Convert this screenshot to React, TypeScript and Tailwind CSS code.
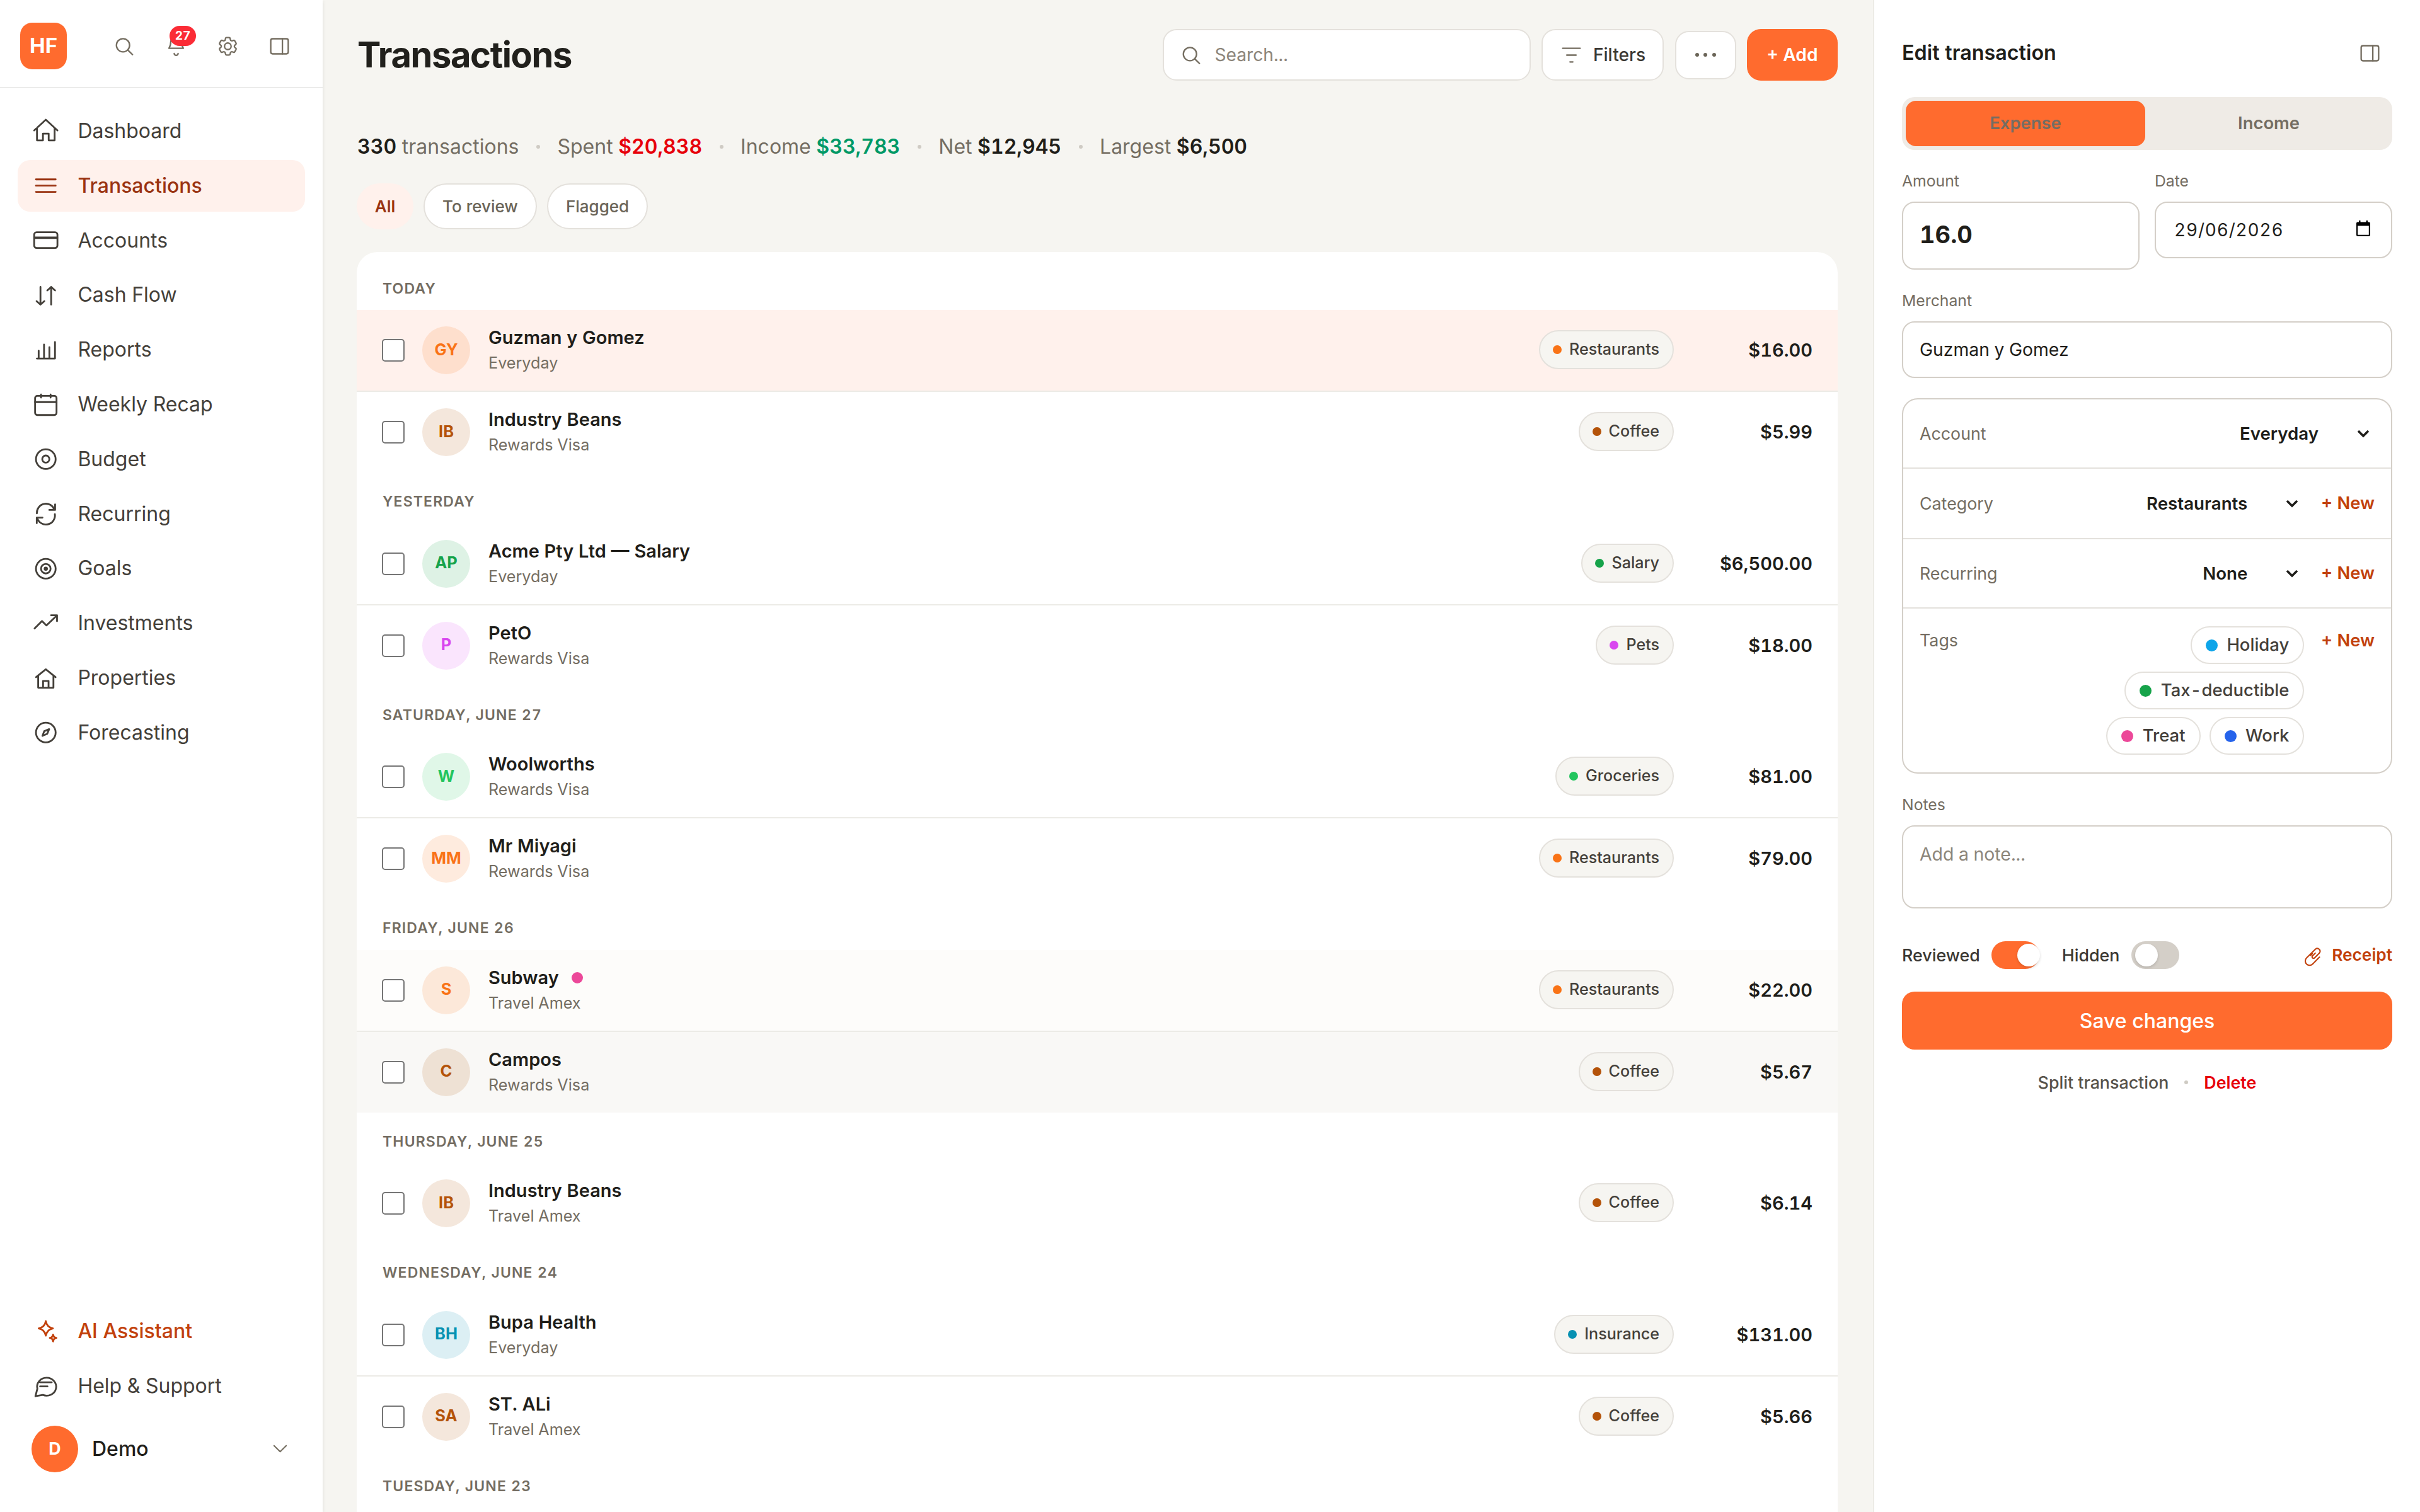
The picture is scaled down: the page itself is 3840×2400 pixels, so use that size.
import type { ReactNode } from "react";
import { clsx } from "clsx";

type NavItem = { label: string; icon: ReactNode };

const navItems: NavItem[] = [
  {
    label: "Dashboard",
    icon: <path d="M2.25 11.6 12 2.6l9.75 9M4.6 9.6V20h5v-5.7h4.8V20h5V9.6" />,
  },
  { label: "Transactions", icon: <path d="M3.75 6.75h16.5M3.75 12h16.5M3.75 17.25h16.5" /> },
  {
    label: "Accounts",
    icon: (
      <>
        <rect x="2.25" y="5.1" width="19.5" height="13.2" rx="2" />
        <path d="M2.25 9.3h19.5M2.25 10.1h19.5" strokeWidth="1.2" />
      </>
    ),
  },
  {
    label: "Cash Flow",
    icon: (
      <path d="M7.5 5v14.8m-3.25-2.9 3.25 2.9 3.25-2.9M16.5 19.8V5m-3.25 2.9L16.5 5l3.25 2.9" />
    ),
  },
  {
    label: "Reports",
    icon: <path d="M4.5 19.6h15.2M6 19.6v-6.6M10.5 19.6V7.9M15 19.6v-9.4M19.7 19.6V5.8" />,
  },
  {
    label: "Weekly Recap",
    icon: (
      <>
        <rect x="3" y="5" width="18" height="16" rx="1.8" />
        <path d="M3 10.2h18M8 3.8v2.6M16 3.8v2.6" />
      </>
    ),
  },
  {
    label: "Budget",
    icon: (
      <>
        <circle cx="12" cy="12" r="8.25" />
        <circle cx="12" cy="12" r="3" />
      </>
    ),
  },
  {
    label: "Recurring",
    icon: (
      <path d="M4.5 11.6A7.6 7.6 0 0 1 19.2 8.4M19.8 4v4.7h-4.9M19.6 12.2A7.6 7.6 0 0 1 4.8 15.5M4.4 19.8v-4.7h4.8" />
    ),
  },
  {
    label: "Goals",
    icon: (
      <>
        <circle cx="12" cy="12" r="8.25" />
        <circle cx="12" cy="12" r="4" />
        <circle cx="12" cy="12" r="1" fill="currentColor" />
      </>
    ),
  },
  {
    label: "Investments",
    icon: <path d="m2.6 16.6 6.2-6.2 3.7 3.7 8.8-8.3M16.4 5.6h5v5" />,
  },
  {
    label: "Properties",
    icon: <path d="M3.8 11.6 12 5l8.2 6.6M5.6 10.4v10h12.8v-10M9.7 20.4v-5.7h4.6v5.7" />,
  },
  {
    label: "Forecasting",
    icon: (
      <>
        <circle cx="12" cy="12" r="8.25" />
        <path d="m9.2 14.8 1.5-3.9 4.1-1.7-1.6 3.9z" />
      </>
    ),
  },
];

type Transaction = {
  initials: string;
  merchant: string;
  account: string;
  category: keyof typeof categoryColors;
  amount: string;
  flagged?: boolean;
  rowClass?: string;
};

const categoryColors = {
  Restaurants: "#f97316",
  Coffee: "#b45309",
  Salary: "#16a34a",
  Pets: "#d946ef",
  Groceries: "#22c55e",
  Insurance: "#0891b2",
};

const groups: { date: string; rows: Transaction[] }[] = [
  {
    date: "Today",
    rows: [
      { initials: "GY", merchant: "Guzman y Gomez", account: "Everyday", category: "Restaurants", amount: "$16.00", rowClass: "bg-[#fff1ec]" },
      { initials: "IB", merchant: "Industry Beans", account: "Rewards Visa", category: "Coffee", amount: "$5.99" },
    ],
  },
  {
    date: "Yesterday",
    rows: [
      { initials: "AP", merchant: "Acme Pty Ltd — Salary", account: "Everyday", category: "Salary", amount: "$6,500.00" },
      { initials: "P", merchant: "PetO", account: "Rewards Visa", category: "Pets", amount: "$18.00" },
    ],
  },
  {
    date: "Saturday, June 27",
    rows: [
      { initials: "W", merchant: "Woolworths", account: "Rewards Visa", category: "Groceries", amount: "$81.00" },
      { initials: "MM", merchant: "Mr Miyagi", account: "Rewards Visa", category: "Restaurants", amount: "$79.00" },
    ],
  },
  {
    date: "Friday, June 26",
    rows: [
      { initials: "S", merchant: "Subway", account: "Travel Amex", category: "Restaurants", amount: "$22.00", flagged: true, rowClass: "bg-[#fdfcfa]" },
      { initials: "C", merchant: "Campos", account: "Rewards Visa", category: "Coffee", amount: "$5.67", rowClass: "bg-[#f9f8f6]" },
    ],
  },
  {
    date: "Thursday, June 25",
    rows: [
      { initials: "IB", merchant: "Industry Beans", account: "Travel Amex", category: "Coffee", amount: "$6.14" },
    ],
  },
  {
    date: "Wednesday, June 24",
    rows: [
      { initials: "BH", merchant: "Bupa Health", account: "Everyday", category: "Insurance", amount: "$131.00" },
      { initials: "SA", merchant: "ST. ALi", account: "Travel Amex", category: "Coffee", amount: "$5.66" },
    ],
  },
  { date: "Tuesday, June 23", rows: [] },
];

const tags = [
  { label: "Holiday", dot: "bg-[#0ea5e9]" },
  { label: "Tax-deductible", dot: "bg-[#16a34a]" },
  { label: "Treat", dot: "bg-[#ec4899]" },
  { label: "Work", dot: "bg-[#2563eb]" },
];

function Icon({ className, children }: { className?: string; children: ReactNode }) {
  return (
    <svg
      aria-hidden
      viewBox="0 0 24 24"
      fill="none"
      stroke="currentColor"
      strokeWidth="1.5"
      strokeLinecap="round"
      strokeLinejoin="round"
      className={clsx("shrink-0", className)}
    >
      {children}
    </svg>
  );
}

function PanelIcon() {
  return (
    <Icon className="size-[37px]">
      <rect x="3" y="4.2" width="18" height="15.6" rx="1.9" />
      <path d="M15 4.2v15.6" />
    </Icon>
  );
}

function SearchIcon() {
  return (
    <Icon className="size-[37px]">
      <circle cx="10.5" cy="10.9" r="6.8" />
      <path d="m15.4 15.8 4.9 4.8" />
    </Icon>
  );
}

function Sidebar() {
  return (
    <aside className="relative z-10 flex w-[512px] shrink-0 flex-col bg-white shadow-[0_2px_6px_rgba(0,0,0,0.1)]">
      <div className="flex h-[140px] items-center border-b-2 border-[#ebebea] pl-8 pt-[8px]">
        <div className="flex size-[74px] items-center justify-center rounded-[19px] bg-[#ff6b2e] text-[33px] font-bold text-white">
          HF
        </div>
        <div className="ml-[50px] flex text-[#746d60]">
          <button type="button" className="flex size-[82px] items-center justify-center">
            <SearchIcon />
          </button>
          <button type="button" className="relative flex size-[82px] items-center justify-center">
            <Icon className="size-[37px]">
              <path d="M4.6 14h14.8M4.6 14c1.2-1.9 1.9-4 1.9-7a5.5 5.5 0 0 1 11 0c0 3 .7 5.1 1.9 7M10 19.4a2 1.9 0 0 0 4 0" />
            </Icon>
            <span className="absolute left-[31px] top-[9px] flex h-8 w-[42px] items-center justify-center rounded-full bg-[#fb2c36] text-[19px] font-bold text-white">
              27
            </span>
          </button>
          <button type="button" className="flex size-[82px] items-center justify-center">
            <Icon className="size-[37px]">
              <path d="M9.594 3.94c.09-.542.56-.94 1.11-.94h2.593c.55 0 1.02.398 1.11.94l.213 1.281c.063.374.313.686.645.87.074.04.147.083.22.127.325.196.72.257 1.075.124l1.217-.456a1.125 1.125 0 0 1 1.37.49l1.296 2.247a1.125 1.125 0 0 1-.26 1.431l-1.003.827c-.293.241-.438.613-.43.992a7.723 7.723 0 0 1 0 .255c-.008.378.137.75.43.991l1.004.827c.424.35.534.955.26 1.43l-1.298 2.247a1.125 1.125 0 0 1-1.369.491l-1.217-.456c-.355-.133-.75-.072-1.076.124a6.47 6.47 0 0 1-.22.128c-.331.183-.581.495-.644.869l-.213 1.281c-.09.543-.56.94-1.11.94h-2.594c-.55 0-1.019-.398-1.11-.94l-.213-1.281c-.062-.374-.312-.686-.644-.87a6.52 6.52 0 0 1-.22-.127c-.325-.196-.72-.257-1.076-.124l-1.217.456a1.125 1.125 0 0 1-1.369-.49l-1.297-2.247a1.125 1.125 0 0 1 .26-1.431l1.004-.827c.292-.24.437-.613.43-.991a6.932 6.932 0 0 1 0-.255c.007-.38-.138-.751-.43-.992l-1.004-.827a1.125 1.125 0 0 1-.26-1.43l1.297-2.247a1.125 1.125 0 0 1 1.37-.491l1.216.456c.356.133.751.072 1.076-.124.072-.044.146-.086.22-.128.332-.183.582-.495.644-.869l.214-1.28Z" />
              <circle cx="12" cy="12" r="3.4" />
            </Icon>
          </button>
          <button type="button" className="flex size-[82px] items-center justify-center">
            <PanelIcon />
          </button>
        </div>
      </div>

      <nav className="flex flex-1 flex-col gap-[4.8px] px-7 pt-[27px]">
        {navItems.map((item) => {
          const active = item.label === "Transactions";
          return (
            <a
              key={item.label}
              className={clsx(
                "flex h-[82px] items-center gap-[28px] rounded-[20px] pl-[22px] text-[32px]",
                active ? "bg-[#fff1ec] font-medium text-[#9a3412]" : "text-[#44403a]"
              )}
            >
              <Icon className="size-[45.4px]">{item.icon}</Icon>
              {item.label}
            </a>
          );
        })}
      </nav>

      <div className="flex flex-col gap-[4.8px] px-7 pb-[51px]">
        <a className="flex h-[82px] items-center gap-[28px] pl-[22px] text-[32px] font-medium text-[#c2410c]">
          <Icon className="size-[45.4px]">
            <path d="M12 3.2c.6 3.6 2.3 5.4 6 6.1-3.7.7-5.4 2.5-6 6.1-.6-3.6-2.3-5.4-6-6.1 3.7-.7 5.4-2.5 6-6.1zM18.1 14.5c.3 1.7 1 2.5 2.8 2.8-1.8.3-2.5 1.1-2.8 2.9-.3-1.8-1-2.6-2.8-2.9 1.8-.3 2.5-1.1 2.8-2.8z" />
          </Icon>
          AI Assistant
        </a>
        <a className="flex h-[82px] items-center gap-[28px] pl-[22px] text-[32px] text-[#44403a]">
          <Icon className="size-[45.4px]">
            <path d="M3.3 20.2 4.9 13.9A8 7.5 0 1 1 9.5 19.1zM7 8.5h10M7.2 12h6.2" />
          </Icon>
          Help &amp; Support
        </a>
        <button type="button" className="mt-[4px] flex h-[99px] items-center pl-[22px] pr-[23px]">
          <span className="flex size-[74px] items-center justify-center rounded-full bg-[#ff6b2e] text-[26.8px] font-bold text-white">
            D
          </span>
          <span className="ml-[22px] text-[32px] font-medium text-[#1f1e1a]">Demo</span>
          <Icon className="ml-auto size-[33px] text-[#746d60]">
            <path d="m5 8.5 7 7 7-7" />
          </Icon>
        </button>
      </div>
    </aside>
  );
}

function Stat({ label, value, valueClass }: { label: string; value: string; valueClass?: string }) {
  return (
    <>
      <span className="size-[6px] rounded-full bg-[#cfcbc4]" />
      <span>
        {label}{" "}
        <span className={clsx("font-semibold", valueClass ?? "text-[#1f1e1a]")}>{value}</span>
      </span>
    </>
  );
}

function TransactionRow({ row, last }: { row: Transaction; last: boolean }) {
  const color = categoryColors[row.category];
  return (
    <div
      className={clsx(
        "flex items-center px-10",
        last ? "h-[128px]" : "h-[130px] border-b-2 border-[#ecebe6]",
        row.rowClass
      )}
    >
      <span className="size-9 rounded-[5px] border-2 border-[#767676] bg-white" />
      <span
        className="ml-7 flex size-[76px] items-center justify-center rounded-full pb-[2px] text-[25.5px] font-bold"
        style={{ color, backgroundColor: `${color}24` }}
      >
        {row.initials}
      </span>
      <div className="ml-[29px] flex flex-1 flex-col">
        <span className="flex items-center gap-5 text-[29px] font-semibold leading-10 text-[#1f1e1a]">
          {row.merchant}
          {row.flagged && <span className="size-[18px] rounded-full bg-[#ec4899]" />}
        </span>
        <span className="text-[25.2px] leading-[40px] text-[#746d62]">{row.account}</span>
      </div>
      <span className="mb-[2px] flex h-[62px] items-center gap-[12px] rounded-full border-2 border-[#e4e1dc] bg-[#f6f5f1] pl-5 pr-[21px] text-[25.1px] font-medium text-[#44403a]">
        <span className="size-[14px] rounded-full" style={{ backgroundColor: color }} />
        {row.category}
      </span>
      <span className="w-[220px] text-right text-[29px] font-semibold text-[#1f1e1a]">{row.amount}</span>
    </div>
  );
}

function TransactionsPage() {
  return (
    <main className="flex min-w-0 flex-1 flex-col pl-[54px] pr-14">
      <header className="flex h-[174px] items-center">
        <h1 className="ml-px text-[56px] font-bold tracking-[-1.4px] text-[#21201c]">Transactions</h1>
        <div className="ml-auto flex items-center gap-[17.5px] text-[28.2px]">
          <div className="flex h-[82px] w-[584px] items-center rounded-[22px] border-2 border-[#e4e1dc] bg-white pl-[25px] text-[#8c857a]">
            <span className="mr-[19px] text-[#746d60]">
              <SearchIcon />
            </span>
            Search...
          </div>
          <button
            type="button"
            className="flex h-[82px] w-[194px] items-center justify-center gap-[16px] rounded-[22px] border-2 border-[#e4e1dc] bg-white font-medium text-[#3b3833]"
          >
            <Icon className="size-[37px] text-[#746d60]">
              <path d="M3 5h18M7.2 12h9.6M10.5 19h3" />
            </Icon>
            Filters
          </button>
          <button
            type="button"
            className="flex h-[77px] w-[97px] items-center justify-center gap-[7.5px] rounded-[22px] border-2 border-[#e4e1dc] bg-white"
          >
            <span className="size-[6px] rounded-full bg-[#6b6558]" />
            <span className="size-[6px] rounded-full bg-[#6b6558]" />
            <span className="size-[6px] rounded-full bg-[#6b6558]" />
          </button>
          <button
            type="button"
            className="flex h-[82px] w-36 items-center justify-center rounded-[22px] bg-[#ff6b2e] font-semibold text-white"
          >
            + Add
          </button>
        </div>
      </header>

      <div className="ml-px mt-[38px] flex h-[41px] items-center gap-[27.5px] text-[32px] text-[#746d62]">
        <span>
          <span className="font-semibold text-[#1f1e1a]">330</span> transactions
        </span>
        <Stat label="Spent" value="$20,838" valueClass="text-[#e7000b]" />
        <Stat label="Income" value="$33,783" valueClass="text-[#009966]" />
        <Stat label="Net" value="$12,945" />
        <Stat label="Largest" value="$6,500" />
      </div>

      <div className="mt-[38px] flex h-[73px] gap-4 text-[26px] font-medium text-[#6b6558]">
        <span className="flex w-[90px] items-center justify-center rounded-full bg-[#fff1ec] font-semibold text-[#9a3412]">
          All
        </span>
        <span className="flex w-[180px] items-center justify-center rounded-full border-2 border-[#e4e1dc] bg-white">
          To review
        </span>
        <span className="flex w-[160px] items-center justify-center rounded-full border-2 border-[#e4e1dc] bg-white">
          Flagged
        </span>
      </div>

      <section className="mt-9 flex-1 overflow-hidden rounded-t-[33px] bg-white pt-[11.5px]">
        {groups.map((group) => (
          <div key={group.date}>
            <h2 className="flex h-[80.5px] items-center pl-[41px] pt-[12px] text-[23px] font-semibold uppercase tracking-[1.15px] text-[#746d62]">
              {group.date}
            </h2>
            {group.rows.map((row, index) => (
              <TransactionRow key={row.merchant} row={row} last={index === group.rows.length - 1} />
            ))}
          </div>
        ))}
      </section>
    </main>
  );
}

function SelectValue({ value, withNew }: { value: string; withNew?: boolean }) {
  return (
    <div className="flex items-center pt-px text-[27.7px] font-semibold text-[#1f1e1a]">
      {value}
      <svg
        aria-hidden
        viewBox="0 0 20 14"
        fill="none"
        stroke="currentColor"
        strokeWidth="3.6"
        className={clsx("h-[14px] w-5", withNew ? "ml-[61px] mr-[36px]" : "ml-[61px] mr-[8px]")}
      >
        <path d="m2 3 8 8 8-8" />
      </svg>
      {withNew && <span className="pb-px text-[27.4px] text-[#c2410c]">+ New</span>}
    </div>
  );
}

function TagPill({ label, dot }: { label: string; dot: string }) {
  return (
    <span className="flex h-[60px] items-center gap-[14.5px] rounded-full border-2 border-[#e4e1dc] pl-[22px] pr-[22px] text-[27.5px] font-medium text-[#44403a]">
      <span className={clsx("size-[19px] rounded-full", dot)} />
      {label}
    </span>
  );
}

function EditPanel() {
  return (
    <aside className="flex w-[868px] shrink-0 flex-col border-l-2 border-[#ecebe6] bg-white pl-11 pr-11 text-[26.8px]">
      <div className="flex h-[154px] items-center justify-between pr-[17px] pt-[15px]">
        <h2 className="text-[32.3px] font-semibold text-[#1f1e1a]">Edit transaction</h2>
        <span className="text-[#746d60]">
          <PanelIcon />
        </span>
      </div>

      <div className="flex h-[84px] rounded-[20px] bg-[#efebe6] py-[6px] pl-[6px] text-[27.4px] font-semibold text-[#746d62]">
        <span className="flex w-[380px] items-center justify-center rounded-[16px] bg-[#ff6b2e]">Expense</span>
        <span className="flex flex-1 items-center justify-center">Income</span>
      </div>

      <div className="mt-[29px] grid grid-cols-2 gap-x-6 text-[#1f1e1a]">
        <div>
          <p className="h-[53px] text-[24.75px] leading-10 text-[#746d62]">Amount</p>
          <div className="flex h-[108px] items-center rounded-[20px] border-2 border-[#d4cfc8] pl-[26px] pb-1 text-[38px] font-bold">
            16.0
          </div>
        </div>
        <div>
          <p className="h-[53px] text-[24.75px] leading-10 text-[#746d62]">Date</p>
          <div className="flex h-[90px] items-center justify-between rounded-[20px] border-2 border-[#d4cfc8] pl-[29px] pr-8 text-[28px]">
            <span className="tracking-[0.8px]">29/06/2026</span>
            <svg aria-hidden viewBox="0 0 24 26" className="mb-1 h-[26px] w-6 text-black">
              <path
                fill="currentColor"
                fillRule="evenodd"
                d="M3 2.5h2V0h2.5v2.5h9V0H19v2.5h2a2 2 0 0 1 2 2V23a2 2 0 0 1-2 2H3a2 2 0 0 1-2-2V4.5a2 2 0 0 1 2-2zM3.2 8.5v14.3h17.6V8.5z"
              />
            </svg>
          </div>
        </div>
      </div>

      <p className="mt-[29px] h-[53px] text-[24.75px] leading-10 text-[#746d62]">Merchant</p>
      <div className="flex h-[90px] items-center rounded-[20px] border-2 border-[#d4cfc8] pl-[26px] pt-px text-[28.3px] text-[#1f1e1a]">
        Guzman y Gomez
      </div>

      <div className="mt-8 flex flex-col rounded-[25px] border-2 border-[#d4cfc8] text-[#746d62]">
        <div className="flex h-[110px] items-center justify-between border-b-2 border-[#e4e1dc] px-[26px]">
          Account
          <SelectValue value="Everyday" />
        </div>
        <div className="flex h-[112px] items-center justify-between border-b-2 border-[#e4e1dc] px-[26px]">
          Category
          <SelectValue value="Restaurants" withNew />
        </div>
        <div className="flex h-[110px] items-center justify-between border-b-2 border-[#e4e1dc] px-[26px]">
          Recurring
          <SelectValue value="None" withNew />
        </div>
        <div className="flex h-[260px] px-[26px] pt-7">
          <span className="leading-[44px]">Tags</span>
          <div className="ml-auto flex w-[350px] flex-wrap content-start justify-end gap-x-[14px] gap-y-3">
            {tags.map((tag) => (
              <TagPill key={tag.label} {...tag} />
            ))}
          </div>
          <span className="ml-[27px] text-[27.4px] font-semibold leading-[44px] text-[#c2410c]">+ New</span>
        </div>
      </div>

      <p className="mt-[28px] h-[54px] pt-px text-[24.75px] leading-10 text-[#746d62]">Notes</p>
      <div className="h-[132px] rounded-[20px] border-2 border-[#d4cfc8] pl-[26px] pt-[24px] text-[28.4px] leading-10 text-[#8c857a]">
        Add a note...
      </div>

      <div className="mt-[52px] flex h-11 items-center text-[#3b3833]">
        <span className="font-medium">Reviewed</span>
        <span className="ml-[18px] flex h-11 w-[76px] items-center rounded-full bg-[#ff6b2e] pl-[41px]">
          <span className="size-9 shrink-0 rounded-full bg-white shadow-[0_2px_4px_rgba(0,0,0,0.15)]" />
        </span>
        <span className="ml-[36px] font-medium">Hidden</span>
        <span className="ml-[19px] flex h-11 w-[76px] items-center rounded-full bg-[#d4cfc8] pl-[6px]">
          <span className="size-9 shrink-0 rounded-full bg-white shadow-[0_2px_4px_rgba(0,0,0,0.15)]" />
        </span>
        <span className="ml-auto flex items-center gap-[14px] text-[26.3px] font-semibold text-[#c2410c]">
          <Icon className="mt-1 size-[33px]">
            <path d="m20 12.6-7.9 7.9a4.9 4.9 0 0 1-7-7L15.4 3.3a3.2 3.2 0 0 1 4.5 4.5l-5.6 5.6a1.6 1.6 0 0 1-2.3-2.3l3.2-3.2M9.8 10.6l2-2" />
          </Icon>
          Receipt
        </span>
      </div>

      <button
        type="button"
        className="mt-9 flex h-[92px] items-center justify-center rounded-[20px] bg-[#ff6b2e] pt-px text-[32px] font-medium text-white"
      >
        Save changes
      </button>

      <div className="mt-[30px] flex h-11 items-center justify-center">
        <span className="font-medium text-[#57524a]">Split transaction</span>
        <span className="mx-[25px] size-[6px] rounded-full bg-[#cfcbc4]" />
        <span className="font-semibold text-[#e7000b]">Delete</span>
      </div>
    </aside>
  );
}

export default function App() {
  return (
    <div className="flex h-[2400px] w-[3840px] overflow-hidden bg-[#f6f5f1] font-['Inter',sans-serif] tabular-nums leading-normal">
      <Sidebar />
      <TransactionsPage />
      <EditPanel />
    </div>
  );
}
